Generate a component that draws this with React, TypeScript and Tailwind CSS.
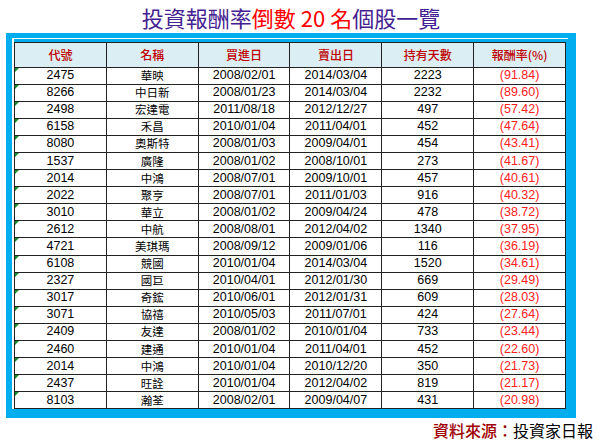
const rows: [string, string, string, string, string, string][] = [
  ['2475', '華映', '2008/02/01', '2014/03/04', '2223', '(91.84)'],
  ['8266', '中日新', '2008/01/23', '2014/03/04', '2232', '(89.60)'],
  ['2498', '宏達電', '2011/08/18', '2012/12/27', '497', '(57.42)'],
  ['6158', '禾昌', '2010/01/04', '2011/04/01', '452', '(47.64)'],
  ['8080', '奧斯特', '2008/01/03', '2009/04/01', '454', '(43.41)'],
  ['1537', '廣隆', '2008/01/02', '2008/10/01', '273', '(41.67)'],
  ['2014', '中鴻', '2008/07/01', '2009/10/01', '457', '(40.61)'],
  ['2022', '聚亨', '2008/07/01', '2011/01/03', '916', '(40.32)'],
  ['3010', '華立', '2008/01/02', '2009/04/24', '478', '(38.72)'],
  ['2612', '中航', '2008/08/01', '2012/04/02', '1340', '(37.95)'],
  ['4721', '美琪瑪', '2008/09/12', '2009/01/06', '116', '(36.19)'],
  ['6108', '競國', '2010/01/04', '2014/03/04', '1520', '(34.61)'],
  ['2327', '國巨', '2010/04/01', '2012/01/30', '669', '(29.49)'],
  ['3017', '奇鋐', '2010/06/01', '2012/01/31', '609', '(28.03)'],
  ['3071', '協禧', '2010/05/03', '2011/07/01', '424', '(27.64)'],
  ['2409', '友達', '2008/01/02', '2010/01/04', '733', '(23.44)'],
  ['2460', '建通', '2010/01/04', '2011/04/01', '452', '(22.60)'],
  ['2014', '中鴻', '2010/01/04', '2010/12/20', '350', '(21.73)'],
  ['2437', '旺詮', '2010/01/04', '2012/04/02', '819', '(21.17)'],
  ['8103', '瀚荃', '2008/02/01', '2009/04/07', '431', '(20.98)'],
];

const headers = ['代號', '名稱', '買進日', '賣出日', '持有天數', '報酬率(%)'];

const cjk = "font-['Noto_Sans_CJK_TC','Noto_Sans',sans-serif]";
const num = "font-['Liberation_Sans','Noto_Sans_CJK_TC',sans-serif]";

export default function App() {
  return (
    <div className={`h-[445px] w-[600px] bg-white ${cjk}`}>
      <div className="flex h-[33px] w-[582px] items-center justify-center text-[22px] leading-none text-[#452191]">
        <span>投資報酬率</span>
        <span className="text-[#ff0000]">倒數 20 名</span>
        <span>個股一覽</span>
      </div>

      <div className="ml-[6px] w-[570px] bg-[#00aeef] pb-[9px] pl-[6px] pr-[8px] pt-[5px]">
        <div className="border-l-2 border-t border-white pr-[2px] pt-[3px]">
          <table className="w-[552px] table-fixed border-collapse">
            <thead>
              <tr className="h-[24.5px] bg-[#daeef3]">
                {headers.map((h) => (
                  <th key={h} className="border border-[#222] p-0 text-center text-[12px] font-medium leading-[16px] text-[#c00000]">
                    {h}
                  </th>
                ))}
              </tr>
            </thead>
            <tbody>
              {rows.map((r, i) => (
                <tr key={i} className="h-[17.1px] bg-white">
                  <td className={`relative border border-[#222] p-0 text-center text-[12.5px] leading-[15px] text-black ${num}`}>
                    <span className="absolute left-0 top-0 h-0 w-0 border-r-[4px] border-t-[4px] border-r-transparent border-t-[#1a8f2a]" />
                    {r[0]}
                  </td>
                  <td className={`border border-[#222] p-0 text-center text-[11.5px] leading-[15px] text-black ${cjk}`}>{r[1]}</td>
                  <td className={`border border-[#222] p-0 text-center text-[12.5px] leading-[15px] text-black ${num}`}>{r[2]}</td>
                  <td className={`border border-[#222] p-0 text-center text-[12.5px] leading-[15px] text-black ${num}`}>{r[3]}</td>
                  <td className={`border border-[#222] p-0 text-center text-[12.5px] leading-[15px] text-black ${num}`}>{r[4]}</td>
                  <td className={`border border-[#222] p-0 text-center text-[12.5px] leading-[15px] text-[#ff2020] ${num}`}>{r[5]}</td>
                </tr>
              ))}
            </tbody>
          </table>
        </div>
      </div>

      <div className="flex w-[593px] justify-end pt-[2px] text-[16px] leading-[20px]">
        <span className="font-medium text-[#a00000]">資料來源：</span>
        <span className="text-black">投資家日報</span>
      </div>
    </div>
  );
}
